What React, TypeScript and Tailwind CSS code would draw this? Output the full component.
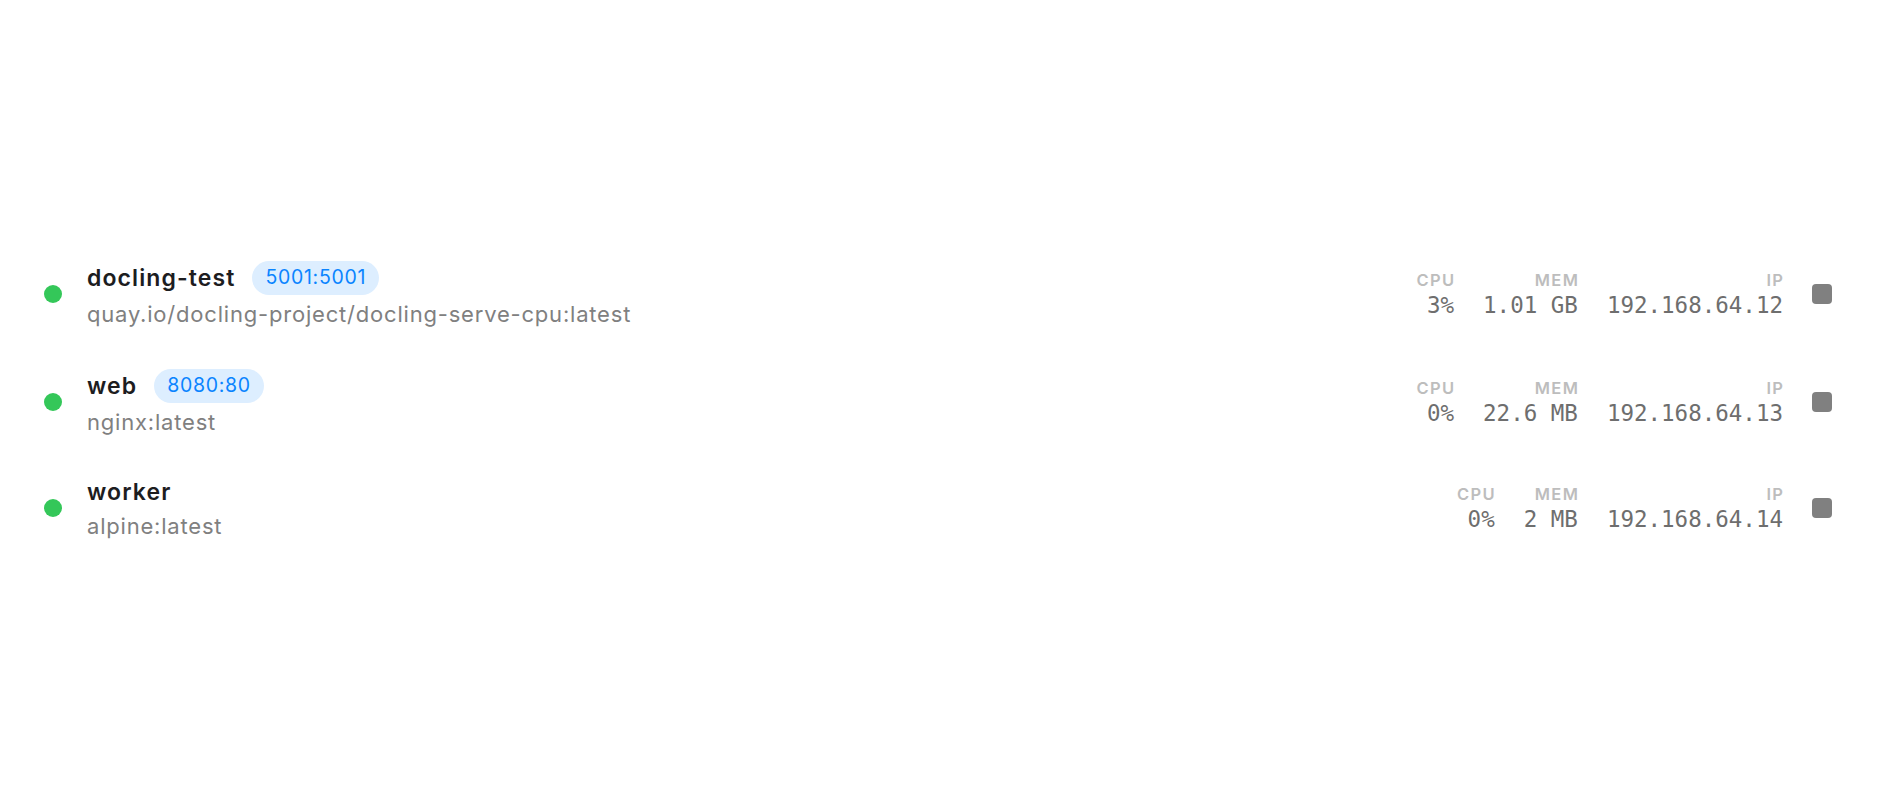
import React from 'react';

type Container = {
  name: string;
  image: string;
  port?: string;
  cpu: string;
  mem: string;
  ip: string;
};

const containers: Container[] = [
  {
    name: 'docling-test',
    image: 'quay.io/docling-project/docling-serve-cpu:latest',
    port: '5001:5001',
    cpu: '3%',
    mem: '1.01 GB',
    ip: '192.168.64.12',
  },
  { name: 'web', image: 'nginx:latest', port: '8080:80', cpu: '0%', mem: '22.6 MB', ip: '192.168.64.13' },
  { name: 'worker', image: 'alpine:latest', cpu: '0%', mem: '2 MB', ip: '192.168.64.14' },
];

const sans = "font-['Inter','Noto_Sans',sans-serif]";

function Stat({ label, value }: { label: string; value: string }) {
  return (
    <div className="flex flex-col items-end">
      <span className={`${sans} text-[16.5px] leading-[18px] font-semibold uppercase tracking-[0.08em] -mr-[0.08em] text-[#bdbdbd]`}>
        {label}
      </span>
      <span className="mt-[3px] font-['DejaVu_Sans_Mono','Liberation_Mono',monospace] text-[22.5px] leading-[26px] text-[#6e6e6e] whitespace-pre">
        {value}
      </span>
    </div>
  );
}

function ContainerRow({ c }: { c: Container }) {
  return (
    <div className="flex items-center py-[21px] pl-[44px] pr-[48px]">
      {/* running indicator */}
      <span className="w-[18px] h-[18px] rounded-full bg-[#34c759] shrink-0" />

      <div className="ml-[25px] flex flex-col min-w-0">
        <div className="flex items-center gap-[17px] min-h-[30px]">
          <span className={`${sans} text-[23px] leading-[30px] font-semibold tracking-[1.1px] text-[#1d1d1f]`}>
            {c.name}
          </span>
          {c.port && (
            <span
              className={`${sans} h-[34px] px-[13px] rounded-full bg-[#ddeeff] text-[#0a84ff] text-[19.5px] tracking-[0.7px] flex items-center`}
            >
              {c.port}
            </span>
          )}
        </div>
        <span className={`${sans} mt-[6px] text-[22px] leading-[26px] tracking-[0.8px] text-[#808080]`}>{c.image}</span>
      </div>

      <div className="ml-auto flex items-center">
        <div className="flex gap-[29px]">
          <Stat label="CPU" value={c.cpu} />
          <Stat label="MEM" value={c.mem} />
          <Stat label="IP" value={c.ip} />
        </div>
        {/* stop button */}
        <button className="ml-[29px] w-5 h-5 rounded-[4px] bg-[#808080]" aria-label="Stop" />
      </div>
    </div>
  );
}

export default function App() {
  return (
    <main className="min-h-screen bg-white flex flex-col justify-center">
      {containers.map((c) => (
        <ContainerRow key={c.name} c={c} />
      ))}
    </main>
  );
}
